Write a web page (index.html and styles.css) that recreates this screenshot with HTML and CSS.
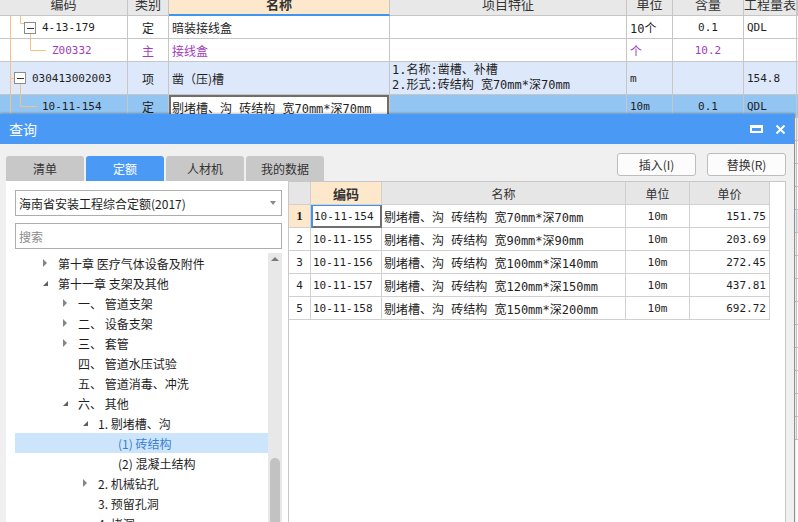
FILE: index.html
```html
<!DOCTYPE html>
<html lang="zh-CN">
<head>
<meta charset="utf-8">
<title>查询</title>
<link rel="stylesheet" href="styles.css">
</head>
<body>
<div class="sheet">
  <div class="srow shead">
    <div class="c">编码</div><div class="c">类别</div><div class="c hsel">名称</div><div class="c">项目特征</div><div class="c">单位</div><div class="c">含量</div><div class="c">工程量表</div><div class="c"></div>
  </div>
  <div class="srow h23">
    <div class="c code"><svg class="tl" width="42" height="22" viewBox="0 0 42 22"><path class="ol" d="M10.5 0V22M20.5 0V7.5H24M30.5 17.5V22"/><rect x="24.5" y="6.5" width="11" height="11" class="bx"/><path class="mn" d="M27 12.5H34"/></svg><span class="m">4-13-179</span></div>
    <div class="c ctr">定</div>
    <div class="c">暗装接线盒</div>
    <div class="c"></div>
    <div class="c mx">10个</div>
    <div class="c ctr m">0.1</div>
    <div class="c m">QDL</div>
    <div class="c"></div>
  </div>
  <div class="srow h23">
    <div class="c code"><svg class="tl" width="52" height="22" viewBox="0 0 52 22"><path class="ol" d="M10.5 0V22M30.5 0V11.5H46"/></svg><span class="m pur">Z00332</span></div>
    <div class="c ctr pur">主</div>
    <div class="c pur">接线盒</div>
    <div class="c"></div>
    <div class="c pur">个</div>
    <div class="c ctr m pur">10.2</div>
    <div class="c"></div>
    <div class="c"></div>
  </div>
  <div class="srow h33 lb">
    <div class="c code"><svg class="tl" width="32" height="32" viewBox="0 0 32 32"><path class="ol" d="M10.5 0V32M10.5 16.5H14M20.5 21.5V32"/><rect x="14.5" y="10.5" width="11" height="11" class="bx"/><path class="mn" d="M17 16.5H24"/></svg><span class="m">030413002003</span></div>
    <div class="c ctr">项</div>
    <div class="c">凿（压)槽</div>
    <div class="c feat mx"><div>1.名称:凿槽、补槽</div><div>2.形式:砖结构 宽70mm*深70mm</div></div>
    <div class="c m">m</div>
    <div class="c"></div>
    <div class="c m">154.8</div>
    <div class="c"></div>
  </div>
  <div class="srow h23 sel">
    <div class="c code"><svg class="tl" width="42" height="22" viewBox="0 0 42 22"><path class="ol" d="M10.5 0V22M20.5 0V11.5H37"/></svg><span class="m">10-11-154</span></div>
    <div class="c ctr">定</div>
    <div class="c ed"><div class="edit mx">剔堵槽、沟 砖结构 宽70mm*深70mm</div></div>
    <div class="c"></div>
    <div class="c m">10m</div>
    <div class="c ctr m">0.1</div>
    <div class="c m">QDL</div>
    <div class="c"></div>
  </div>
  <div class="srow h23"><div class="c"></div><div class="c"></div><div class="c"></div><div class="c"></div><div class="c"></div><div class="c"></div><div class="c"></div><div class="c lbc"></div></div>
  <div class="srow h23"><div class="c"></div><div class="c"></div><div class="c"></div><div class="c"></div><div class="c"></div><div class="c"></div><div class="c"></div><div class="c"></div></div>
  <div class="srow h23"><div class="c"></div><div class="c"></div><div class="c"></div><div class="c"></div><div class="c"></div><div class="c"></div><div class="c"></div><div class="c"></div></div>
  <div class="srow h23"><div class="c"></div><div class="c"></div><div class="c"></div><div class="c"></div><div class="c"></div><div class="c"></div><div class="c"></div><div class="c"></div></div>
  <div class="srow h23"><div class="c"></div><div class="c"></div><div class="c"></div><div class="c"></div><div class="c"></div><div class="c"></div><div class="c"></div><div class="c lbc"></div></div>
  <div class="srow h23"><div class="c"></div><div class="c"></div><div class="c"></div><div class="c"></div><div class="c"></div><div class="c"></div><div class="c"></div><div class="c"></div></div>
  <div class="srow h23"><div class="c"></div><div class="c"></div><div class="c"></div><div class="c"></div><div class="c"></div><div class="c"></div><div class="c"></div><div class="c"></div></div>
  <div class="srow h23"><div class="c"></div><div class="c"></div><div class="c"></div><div class="c"></div><div class="c"></div><div class="c"></div><div class="c"></div><div class="c"></div></div>
  <div class="srow h23"><div class="c"></div><div class="c"></div><div class="c"></div><div class="c"></div><div class="c"></div><div class="c"></div><div class="c"></div><div class="c"></div></div>
  <div class="srow h23"><div class="c"></div><div class="c"></div><div class="c"></div><div class="c"></div><div class="c"></div><div class="c"></div><div class="c"></div><div class="c"></div></div>
  <div class="srow h23"><div class="c"></div><div class="c"></div><div class="c"></div><div class="c"></div><div class="c"></div><div class="c"></div><div class="c"></div><div class="c"></div></div>
  <div class="srow h23"><div class="c"></div><div class="c"></div><div class="c"></div><div class="c"></div><div class="c"></div><div class="c"></div><div class="c"></div><div class="c"></div></div>
  <div class="srow h23"><div class="c"></div><div class="c"></div><div class="c"></div><div class="c"></div><div class="c"></div><div class="c"></div><div class="c"></div><div class="c"></div></div>
  <div class="srow h23"><div class="c"></div><div class="c"></div><div class="c"></div><div class="c"></div><div class="c"></div><div class="c"></div><div class="c"></div><div class="c"></div></div>
</div>

<div class="dialog">
  <div class="titlebar">
    <span class="title">查询</span>
    <span class="wmax"></span>
    <svg class="wclose" width="9" height="9" viewBox="0 0 9 9"><path d="M0.5 0.5L8.5 8.5M8.5 0.5L0.5 8.5" stroke="#fff" stroke-width="2"/></svg>
  </div>
  <div class="dbody">
    <div class="toolbar">
      <div class="tabs">
        <div class="tab">清单</div>
        <div class="tab on">定额</div>
        <div class="tab">人材机</div>
        <div class="tab">我的数据</div>
      </div>
      <div class="btns">
        <div class="btn">插入(I)</div>
        <div class="btn">替换(R)</div>
      </div>
    </div>
    <div class="panes">
      <div class="left">
        <div class="select"><span>海南省安装工程综合定额(2017)</span><span class="caret"></span></div>
        <div class="search">搜索</div>
        <div class="treewrap">
          <div class="tree">
            <div class="ti l0"><svg class="tw" width="16" height="20" viewBox="0 0 16 20"><polygon class="tc" points="1,6 5,10 1,14"/></svg>第十章 医疗气体设备及附件</div>
            <div class="ti l0"><svg class="tw" width="16" height="20" viewBox="0 0 16 20"><polygon class="te" points="1,13 6,13 6,8"/></svg>第十一章 支架及其他</div>
            <div class="ti l1"><svg class="tw" width="16" height="20" viewBox="0 0 16 20"><polygon class="tc" points="1,6 5,10 1,14"/></svg>一、 管道支架</div>
            <div class="ti l1"><svg class="tw" width="16" height="20" viewBox="0 0 16 20"><polygon class="tc" points="1,6 5,10 1,14"/></svg>二、 设备支架</div>
            <div class="ti l1"><svg class="tw" width="16" height="20" viewBox="0 0 16 20"><polygon class="tc" points="1,6 5,10 1,14"/></svg>三、 套管</div>
            <div class="ti l1"><span class="tw"></span>四、 管道水压试验</div>
            <div class="ti l1"><span class="tw"></span>五、 管道消毒、冲洗</div>
            <div class="ti l1"><svg class="tw" width="16" height="20" viewBox="0 0 16 20"><polygon class="te" points="1,13 6,13 6,8"/></svg>六、 其他</div>
            <div class="ti l2"><svg class="tw" width="16" height="20" viewBox="0 0 16 20"><polygon class="te" points="1,13 6,13 6,8"/></svg>1. 剔堵槽、沟</div>
            <div class="ti l3 cur"><span class="tw"></span>(1) 砖结构</div>
            <div class="ti l3"><span class="tw"></span>(2) 混凝土结构</div>
            <div class="ti l2"><svg class="tw" width="16" height="20" viewBox="0 0 16 20"><polygon class="tc" points="1,6 5,10 1,14"/></svg>2. 机械钻孔</div>
            <div class="ti l2"><span class="tw"></span>3. 预留孔洞</div>
            <div class="ti l2"><span class="tw"></span>4. 堵洞</div>
          </div>
          <div class="sb"><span class="up"></span><span class="thumb"></span></div>
        </div>
      </div>
      <div class="right">
        <div class="g">
          <div class="gc gh"></div><div class="gc gh ghs">编码</div><div class="gc gh">名称</div><div class="gc gh">单位</div><div class="gc gh">单价</div>

          <div class="gc rn rns">1</div><div class="gc m focus">10-11-154</div><div class="gc mx">剔堵槽、沟 砖结构 宽70mm*深70mm</div><div class="gc m gct">10m</div><div class="gc m gcr">151.75</div>

          <div class="gc rn">2</div><div class="gc m">10-11-155</div><div class="gc mx">剔堵槽、沟 砖结构 宽90mm*深90mm</div><div class="gc m gct">10m</div><div class="gc m gcr">203.69</div>

          <div class="gc rn">3</div><div class="gc m">10-11-156</div><div class="gc mx">剔堵槽、沟 砖结构 宽100mm*深140mm</div><div class="gc m gct">10m</div><div class="gc m gcr">272.45</div>

          <div class="gc rn">4</div><div class="gc m">10-11-157</div><div class="gc mx">剔堵槽、沟 砖结构 宽120mm*深150mm</div><div class="gc m gct">10m</div><div class="gc m gcr">437.81</div>

          <div class="gc rn">5</div><div class="gc m">10-11-158</div><div class="gc mx">剔堵槽、沟 砖结构 宽150mm*深200mm</div><div class="gc m gct">10m</div><div class="gc m gcr">692.72</div>
        </div>
      </div>
    </div>
  </div>
</div>
</body>
</html>
```

FILE: styles.css
```css
html, body {
  margin: 0;
  padding: 0;
}
body {
  width: 798px;
  height: 522px;
  overflow: hidden;
  position: relative;
  background: #ffffff;
  color: #1e1e1e;
  font-family: "Noto Sans CJK SC", "Noto Sans", sans-serif;
  font-size: 12px;
}

/* ---------- background spreadsheet ---------- */
.sheet {
  margin-top: -8px;
}
.srow {
  display: grid;
  grid-template-columns: 128px 41px 221px 237px 46px 71px 53px 1fr;
}
.c {
  box-sizing: border-box;
  border-right: 1px solid #c6c6c6;
  border-bottom: 1px solid #c6c6c6;
  display: flex;
  align-items: center;
  padding-left: 3px;
  white-space: nowrap;
  overflow: hidden;
}
.shead .c {
  height: 24px;
  background: #e8e8e8;
  justify-content: center;
  padding: 0;
  font-size: 13px;
  color: #333;
}
.shead .hsel {
  background: #fde8cb;
  border-bottom: 2px solid #3d95ee;
  font-weight: bold;
}
.h23 .c { height: 23px; }
.h33 .c { height: 33px; }
.lb .c { background: #dde8fa; }
.sel .c { background: #93c5f3; }
.lbc { background: #dde8fa; }
.ctr {
  justify-content: center;
  padding-left: 0;
}
.code {
  padding-left: 0;
  align-items: stretch;
}
.code span {
  align-self: center;
}
.tl {
  flex: none;
  display: block;
}
.ol {
  fill: none;
  stroke: #f6c27e;
  stroke-width: 1;
}
.bx {
  fill: #ffffff;
  stroke: #8c8c8c;
  stroke-width: 1;
}
.mn {
  fill: none;
  stroke: #333;
  stroke-width: 1;
}
.m {
  font-family: "DejaVu Sans Mono", "Noto Sans CJK SC", monospace;
  font-size: 11px;
}
.mx {
  font-family: "DejaVu Sans Mono", "Noto Sans CJK SC", monospace;
  font-size: 12px;
}
.pur { color: #a23cc0; }
.feat {
  flex-direction: column;
  align-items: flex-start;
  justify-content: center;
  line-height: 15px;
  padding-left: 2px;
}
.ed {
  padding: 0;
  align-items: stretch;
}
.sel .ed { background: #ffffff; }
.edit {
  flex: 1;
  box-sizing: border-box;
  border: 2px solid #6e6e6e;
  border-bottom: none;
  background: #ffffff;
  padding-left: 1px;
  display: flex;
  align-items: center;
}

/* ---------- dialog ---------- */
.dialog {
  position: absolute;
  left: 0;
  top: 114px;
  width: 795px;
  height: 430px;
  box-sizing: border-box;
  border-right: 1px solid #8f8f8f;
  background: #f0f0f0;
  box-shadow: 0 -1px 2px rgba(0, 0, 0, 0.25);
  display: flex;
  flex-direction: column;
}
.titlebar {
  flex: none;
  height: 30px;
  background: #4a9af5;
  color: #ffffff;
  display: flex;
  align-items: center;
  padding-left: 9px;
  font-size: 14px;
}
.title { flex: 1; }
.wmax {
  width: 13px;
  height: 8px;
  box-sizing: border-box;
  border: 2px solid #ffffff;
  border-top-width: 3px;
  margin-right: 13px;
}
.wclose {
  display: block;
  margin-right: 9px;
}
.dbody {
  flex: 1;
  display: flex;
  flex-direction: column;
  padding: 0 8px 0 6px;
}
.toolbar {
  flex: none;
  height: 37px;
  display: flex;
}
.tabs {
  display: flex;
  gap: 2px;
  align-self: flex-end;
}
.tab {
  width: 78px;
  height: 25px;
  background: #c8c8c8;
  border-radius: 3px 3px 0 0;
  display: flex;
  align-items: center;
  justify-content: center;
  color: #333;
  font-size: 12px;
}
.tab.on {
  background: #4a9af5;
  color: #ffffff;
}
.btns {
  margin-left: auto;
  margin-top: 9px;
  display: flex;
  gap: 11px;
  align-self: flex-start;
}
.btn {
  width: 79px;
  height: 23px;
  box-sizing: border-box;
  border: 1px solid #bdbdbd;
  border-radius: 3px;
  background: #fcfcfc;
  display: flex;
  align-items: center;
  justify-content: center;
  color: #333;
}
.panes {
  flex: 1;
  display: flex;
  min-height: 0;
}
.left {
  width: 282px;
  flex: none;
  box-sizing: border-box;
  background: #ffffff;
  padding: 9px 6px 0 9px;
  display: flex;
  flex-direction: column;
}
.select {
  height: 26px;
  box-sizing: border-box;
  border: 1px solid #adadad;
  display: flex;
  align-items: center;
  padding-left: 3px;
  color: #1e1e1e;
}
.caret {
  margin-left: auto;
  margin-right: 5px;
  width: 0;
  height: 0;
  border-left: 3.5px solid transparent;
  border-right: 3.5px solid transparent;
  border-top: 4px solid #8a8a8a;
}
.search {
  margin-top: 7px;
  height: 26px;
  box-sizing: border-box;
  border: 1px solid #adadad;
  display: flex;
  align-items: center;
  padding-left: 3px;
  color: #8c8c8c;
}
.treewrap {
  margin-top: 4px;
  flex: 1;
  display: flex;
  min-height: 0;
}
.tree {
  flex: 1;
}
.ti {
  height: 20px;
  display: flex;
  align-items: center;
  white-space: nowrap;
  color: #1e1e1e;
}
.ti.l0 { padding-left: 27px; }
.ti.l1 { padding-left: 47px; }
.ti.l2 { padding-left: 67px; }
.ti.l3 { padding-left: 87px; }
.tw {
  display: block;
  flex: none;
  width: 16px;
  height: 20px;
}
.tc { fill: #858585; }
.te { fill: #5f5f5f; }
.ti.cur {
  background: #cce5fb;
  color: #3b7fd4;
}
.sb {
  width: 14px;
  flex: none;
  background: #e8e8e8;
  display: flex;
  flex-direction: column;
  align-items: center;
}
.sb .up {
  margin-top: 4px;
  width: 0;
  height: 0;
  border-left: 4px solid transparent;
  border-right: 4px solid transparent;
  border-bottom: 4px solid #7a7a7a;
}
.sb .thumb {
  margin-top: 197px;
  width: 10px;
  height: 90px;
  background: #c2c2c2;
  border-radius: 5px 5px 0 0;
}
.right {
  flex: 1;
  box-sizing: border-box;
  background: #ffffff;
  border: 1px solid #c8c8c8;
}
.g {
  display: grid;
  grid-template-columns: 22px 71px 244px 64px 80px;
  grid-auto-rows: 23px;
}
.gc {
  box-sizing: border-box;
  border-right: 1px solid #d0d0d0;
  border-bottom: 1px solid #d0d0d0;
  display: flex;
  align-items: center;
  padding-left: 2px;
  white-space: nowrap;
  overflow: hidden;
}
.gh {
  background: #e6e6e6;
  justify-content: center;
  padding-left: 0;
  color: #333;
  font-size: 12px;
}
.ghs {
  background: #fde8cb;
  font-weight: bold;
  font-size: 13px;
}
.rn {
  justify-content: center;
  padding-left: 0;
  font-family: "DejaVu Sans Mono", monospace;
  font-size: 11px;
}
.rns {
  background: #fde8cb;
  font-family: "Liberation Serif", serif;
  font-weight: bold;
  font-size: 13px;
}
.focus {
  border: 2px solid #6f6f6f;
  border-left-color: #3f95ee;
  border-top: 1px solid #3f95ee;
  padding-left: 1px;
}
.gct {
  justify-content: center;
  padding-left: 0;
}
.gcr {
  justify-content: flex-end;
  padding-right: 3px;
}
```
